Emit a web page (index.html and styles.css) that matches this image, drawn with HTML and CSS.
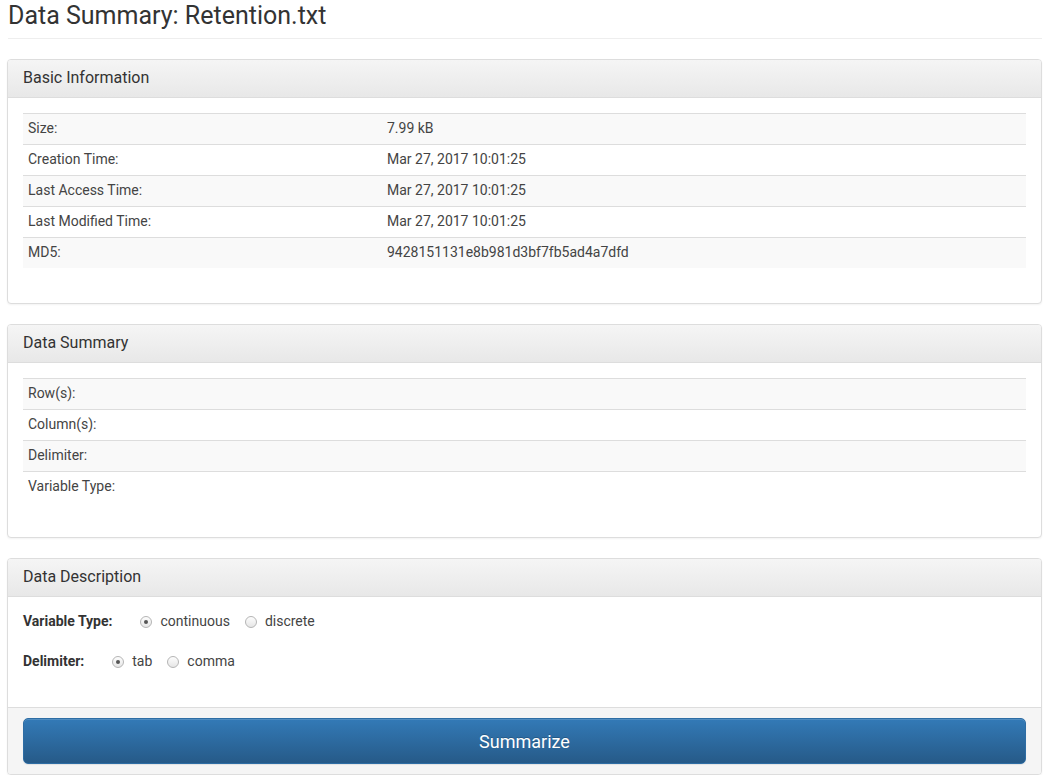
FILE: index.html
```html
<!DOCTYPE html>
<html>
<head>
<meta charset="utf-8">
<link rel="stylesheet" href="styles.css">
</head>
<body>
<div class="page">
  <h1 class="title">Data Summary: Retention.txt</h1>

  <div class="panel">
    <div class="panel-heading">Basic Information</div>
    <div class="panel-body">
      <table class="info">
        <tr><td class="key">Size:</td><td>7.99 kB</td></tr>
        <tr><td class="key">Creation Time:</td><td>Mar 27, 2017 10:01:25</td></tr>
        <tr><td class="key">Last Access Time:</td><td>Mar 27, 2017 10:01:25</td></tr>
        <tr><td class="key">Last Modified Time:</td><td>Mar 27, 2017 10:01:25</td></tr>
        <tr><td class="key">MD5:</td><td>9428151131e8b981d3bf7fb5ad4a7dfd</td></tr>
      </table>
    </div>
  </div>

  <div class="panel">
    <div class="panel-heading">Data Summary</div>
    <div class="panel-body">
      <table class="info">
        <tr><td class="key">Row(s):</td><td></td></tr>
        <tr><td class="key">Column(s):</td><td></td></tr>
        <tr><td class="key">Delimiter:</td><td></td></tr>
        <tr><td class="key">Variable Type:</td><td></td></tr>
      </table>
    </div>
  </div>

  <div class="panel last">
    <div class="panel-heading">Data Description</div>
    <div class="panel-body form">
      <div class="form-row">
        <span class="form-label">Variable Type:</span>
        <label class="radio"><span class="dot checked"></span>continuous</label>
        <label class="radio"><span class="dot"></span>discrete</label>
      </div>
      <div class="form-row">
        <span class="form-label">Delimiter:</span>
        <label class="radio"><span class="dot checked"></span>tab</label>
        <label class="radio"><span class="dot"></span>comma</label>
      </div>
    </div>
    <div class="panel-footer">
      <button class="btn">Summarize</button>
    </div>
  </div>
</div>
</body>
</html>
```
FILE: styles.css
```css
* { box-sizing: border-box; }
html, body { margin: 0; padding: 0; background: #fff; }
body {
  font-family: Roboto, "Liberation Sans", sans-serif;
  font-size: 14px;
  color: #333;
  line-height: 1.42857;
}
.page {
  padding: 0 6px 0 8px;
}
.title {
  font-size: 25px;
  font-weight: 400;
  margin: 0 0 20px 0;
  padding: 2px 0 8px 0;
  line-height: 28px;
  border-bottom: 1px solid #eee;
  color: #333;
}
.panel {
  margin: 0 0 20px -1px;
  border: 1px solid #ddd;
  border-radius: 4px;
  box-shadow: 0 1px 2px rgba(0,0,0,0.05);
  background: #fff;
}
.panel.last { margin-bottom: 0; }
.panel-heading {
  height: 38px;
  padding: 7px 15px 0 15px;
  font-size: 16px;
  line-height: 22px;
  color: #333;
  background: linear-gradient(#f5f5f5, #e8e8e8);
  border-bottom: 1px solid #ddd;
  border-radius: 3px 3px 0 0;
}
.panel-body {
  padding: 15px;
}
.info {
  width: 100%;
  border-collapse: separate;
  border-spacing: 0;
  margin-bottom: 20px;
}
.info td {
  height: 31px;
  padding: 0 5px;
  border-top: 1px solid #ddd;
  vertical-align: middle;
  color: #444;
}
.info td.key { width: 359px; }
.info tr:nth-child(odd) td { background: #f9f9f9; }
.panel-body.form {
  padding: 15px 15px 0 15px;
  height: 110px;
}
.form-row {
  display: flex;
  align-items: center;
  height: 20px;
  margin-bottom: 20px;
}
.form-label {
  font-weight: 700;
  color: #333;
  margin-right: 28px;
}
.radio {
  display: inline-flex;
  align-items: center;
  margin-right: 15px;
  color: #444;
}
.dot {
  width: 12px;
  height: 12px;
  border-radius: 50%;
  border: 1px solid #b5b5b5;
  background: linear-gradient(#fdfdfd, #e6e6e6);
  margin-right: 8px;
  position: relative;
}
.dot.checked::after {
  content: "";
  position: absolute;
  left: 3px;
  top: 3px;
  width: 4px;
  height: 4px;
  border-radius: 50%;
  background: #555;
}
.panel-footer {
  padding: 10px 15px;
  background: #f5f5f5;
  border-top: 1px solid #ddd;
  border-radius: 0 0 3px 3px;
}
.btn {
  display: block;
  width: 100%;
  height: 46px;
  border: 1px solid #2e6da4;
  border-radius: 5px;
  background: linear-gradient(#337ab7, #265a88);
  color: #fff;
  font-family: Roboto, "Liberation Sans", sans-serif;
  font-size: 18px;
  text-shadow: 0 -1px 0 rgba(0,0,0,0.2);
  box-shadow: inset 0 1px 0 rgba(255,255,255,0.15), 0 1px 1px rgba(0,0,0,0.075);
}
```
